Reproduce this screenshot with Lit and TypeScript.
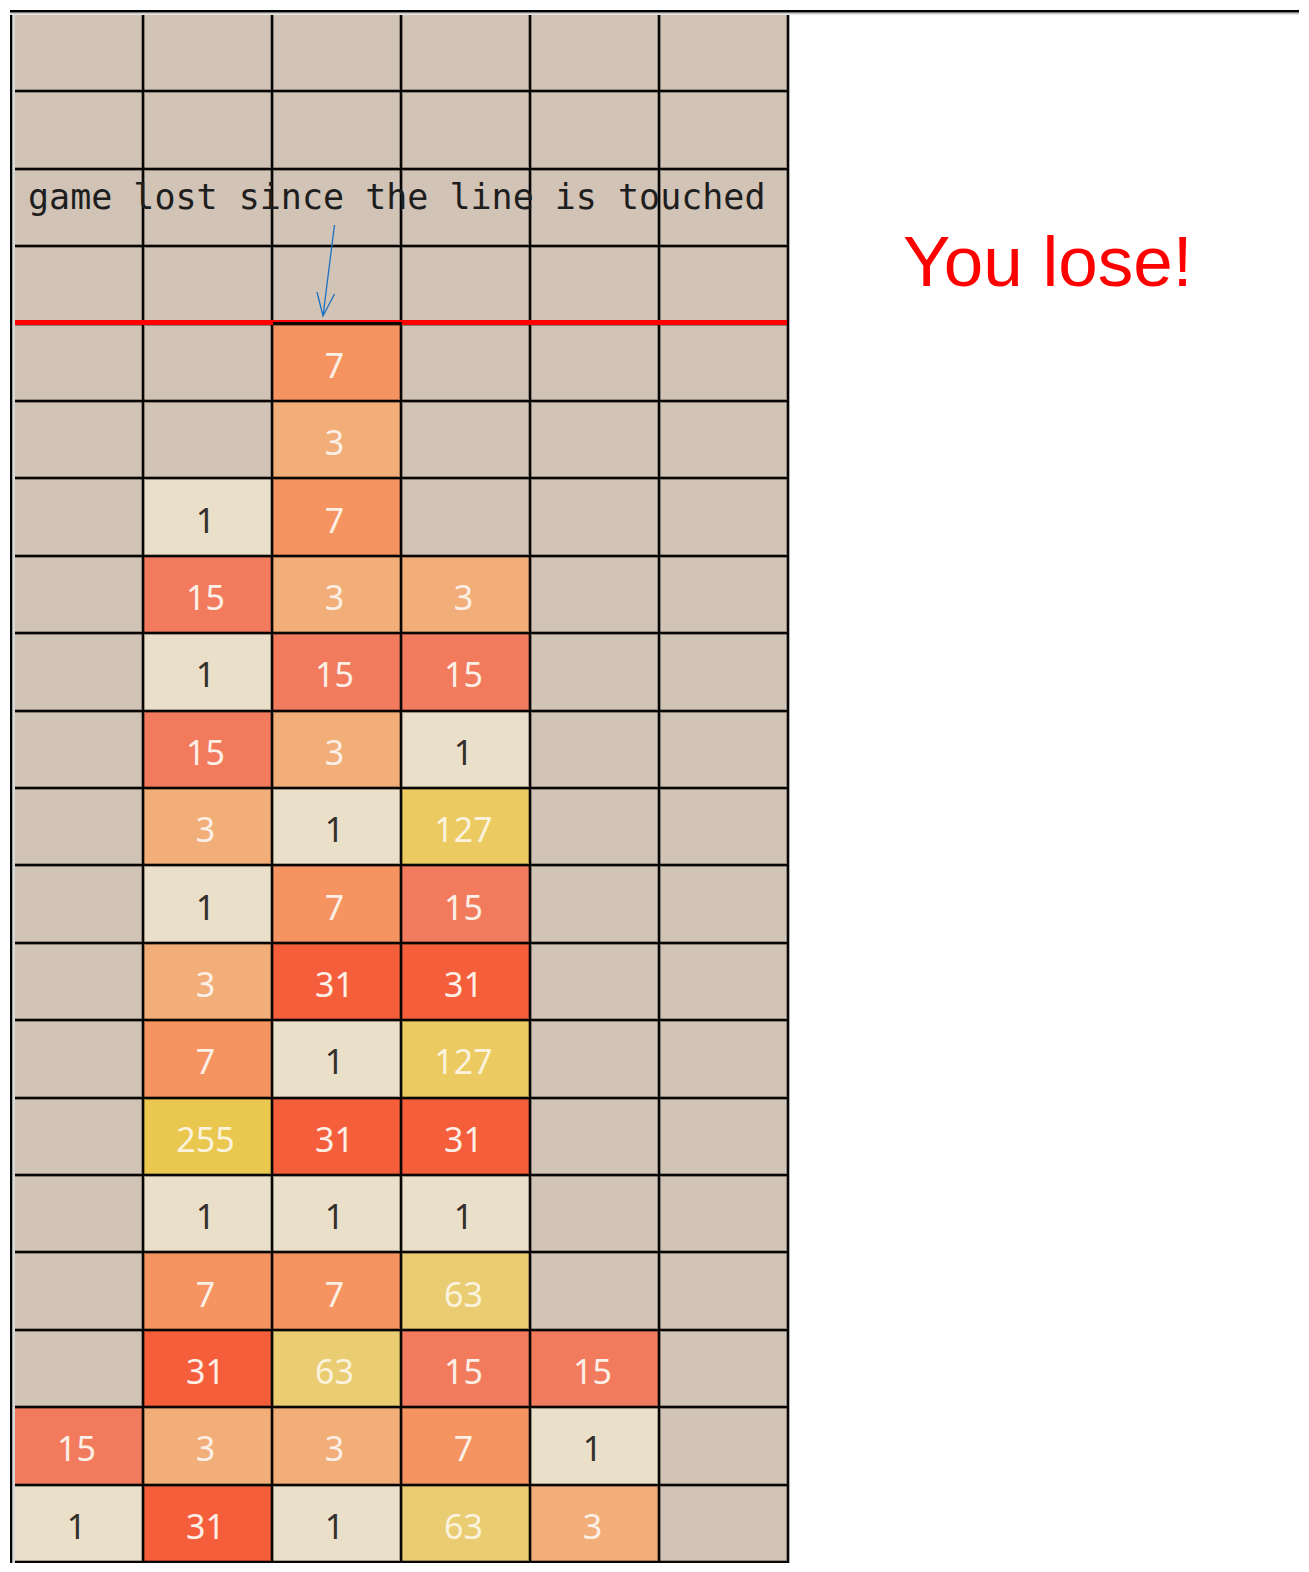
import { LitElement, html, css, nothing } from "lit";
import { customElement, property } from "lit/decorators.js";

const COLUMNS = 6;

// Board rows from top to bottom; 0 is an empty cell.
const ROWS: number[][] = [
  [0, 0, 0, 0, 0, 0],
  [0, 0, 0, 0, 0, 0],
  [0, 0, 0, 0, 0, 0],
  [0, 0, 0, 0, 0, 0],
  [0, 0, 7, 0, 0, 0],
  [0, 0, 3, 0, 0, 0],
  [0, 1, 7, 0, 0, 0],
  [0, 15, 3, 3, 0, 0],
  [0, 1, 15, 15, 0, 0],
  [0, 15, 3, 1, 0, 0],
  [0, 3, 1, 127, 0, 0],
  [0, 1, 7, 15, 0, 0],
  [0, 3, 31, 31, 0, 0],
  [0, 7, 1, 127, 0, 0],
  [0, 255, 31, 31, 0, 0],
  [0, 1, 1, 1, 0, 0],
  [0, 7, 7, 63, 0, 0],
  [0, 31, 63, 15, 15, 0],
  [15, 3, 3, 7, 1, 0],
  [1, 31, 1, 63, 3, 0],
];

@customElement("game-board")
export class GameBoard extends LitElement {
  @property({ attribute: false }) rows: number[][] = [];

  static styles = css`
    :host {
      display: block;
      position: relative;
    }
    .grid {
      display: grid;
      grid-template-columns: repeat(6, minmax(0, 1fr));
      grid-template-rows: repeat(20, minmax(0, 1fr));
      aspect-ratio: 1 / 2;
    }
    .cell {
      --left: 1px;
      --top: 1px;
      --outer: 0px;
      box-sizing: border-box;
      display: flex;
      align-items: center;
      justify-content: center;
      padding: 5px 4px 0 0;
      border-right: 2px solid #080604;
      border-bottom: 2px solid #080604;
      box-shadow: inset var(--left) var(--top) rgba(0, 0, 0, 0.35),
        inset -1px -1px rgba(0, 0, 0, 0.3), var(--outer) 0 rgba(0, 0, 0, 0.3);
      background: #d1c3b6;
      color: #fcefe6;
      font: 34px/40px "Noto Sans", "Open Sans", sans-serif;
    }
    .first { --left: 0px; }
    .top { --top: 0px; }
    .last { --outer: 1px; }
    .v1 { background: #eadfc8; color: #33302c; }
    .v3 { background: #f1ae78; }
    .v7 { background: #f59460; }
    .v15 { background: #f27b5e; }
    .v31 { background: #f55e3b; }
    .v63 { background: #eacc72; color: #fbf3de; }
    .v127 { background: #eaca61; color: #fbf3de; }
    .v255 { background: #eac74f; color: #fbf3de; }
    .limit {
      position: absolute;
      top: 20%;
      left: 0;
      right: 2px;
      height: 5px;
      margin-top: -5px;
      background: #ff0000;
    }
    .over {
      position: absolute;
      top: 20%;
      left: 33.333%;
      width: 16.667%;
      height: 3px;
      margin-top: -3px;
      background: #140804;
    }
    .note {
      position: absolute;
      top: 10%;
      left: 0;
      right: 0;
      margin: 0;
      padding: 7px 0 0 13px;
      color: #1e1e1e;
      font: 35px/40px "DejaVu Sans Mono", "Liberation Mono", monospace;
      white-space: nowrap;
    }
    .arrow {
      position: absolute;
      top: 13.5%;
      left: 39%;
      width: 20px;
      height: 94px;
      margin-left: -1px;
      fill: none;
      stroke: #1971c2;
      stroke-width: 1.3;
    }
  `;

  private cell(value: number, row: number, column: number) {
    const names = ["cell"];
    if (value) names.push(`v${value}`);
    if (row === 0) names.push("top");
    if (column === 0) names.push("first");
    if (column === COLUMNS - 1) names.push("last");
    return html`<div class=${names.join(" ")}>${value || nothing}</div>`;
  }

  render() {
    return html`
      <div class="grid">
        ${this.rows.map((row, r) => row.map((value, c) => this.cell(value, r, c)))}
      </div>
      <div class="limit"></div>
      <div class="over"></div>
      <p class="note">game lost since the line is touched</p>
      <svg class="arrow" viewBox="0 0 20 94" aria-hidden="true">
        <path d="M18.5 1 L7 92 M1 68 L7 92 L18.5 70" />
      </svg>
    `;
  }
}

@customElement("app-root")
export class AppRoot extends LitElement {
  static styles = css`
    :host {
      display: block;
      box-sizing: border-box;
      padding: 10px 10px 9px;
      background: #ffffff;
    }
    .window {
      display: grid;
      grid-template-columns: 779fr 510fr;
      border-top: 2px solid #000000;
      box-shadow: inset 0 1px #777777, inset 0 2px #c8c8c8, inset 0 3px #e8e8e8;
      padding-top: 3px;
    }
    .left {
      border-left: 2px solid #000000;
      box-shadow: inset 1px 0 #a0a5a5, inset 3px 0 #d8d8d8;
      padding-left: 3px;
    }
    .result {
      margin: 0;
      padding: 207px 0 0 114px;
      color: #ff0000;
      font: 71px/80px "Liberation Sans", Arial, sans-serif;
      white-space: nowrap;
    }
  `;

  render() {
    return html`
      <main class="window">
        <div class="left">
          <game-board .rows=${ROWS}></game-board>
        </div>
        <p class="result" role="status">You lose!</p>
      </main>
    `;
  }
}
